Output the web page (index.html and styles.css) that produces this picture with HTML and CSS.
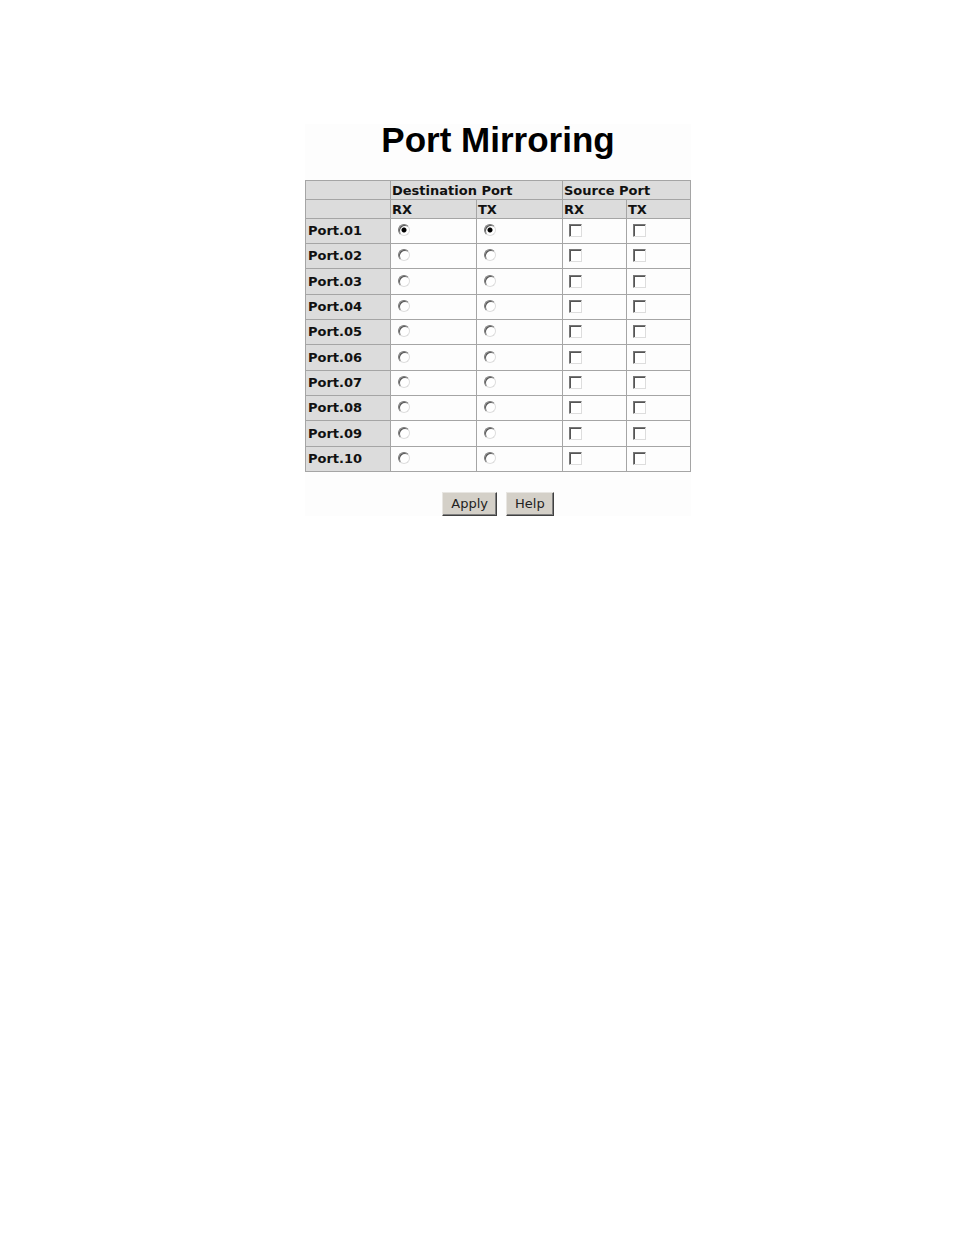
FILE: index.html
```html
<!DOCTYPE html>
<html lang="en">
<head>
    <meta charset="UTF-8">
    <meta name="viewport" content="width=device-width, initial-scale=1.0">
    <title>Port Mirroring</title>
    <link rel="stylesheet" href="styles.css">
</head>
<body>
    <form class="container">
        <h1>Port Mirroring</h1>
        <table class="ports">
            <colgroup>
                <col class="name">
                <col class="dest">
                <col class="dest">
                <col class="source">
                <col class="source">
            </colgroup>
            <thead>
                <tr>
                    <th></th>
                    <th colspan="2">Destination Port</th>
                    <th colspan="2">Source Port</th>
                </tr>
                <tr>
                    <th></th>
                    <th>RX</th>
                    <th>TX</th>
                    <th>RX</th>
                    <th>TX</th>
                </tr>
            </thead>
            <tbody>
                <tr>
                    <th>Port.01</th>
                    <td><input type="radio" name="dest_rx" aria-label="Port.01 destination RX" checked></td>
                    <td><input type="radio" name="dest_tx" aria-label="Port.01 destination TX" checked></td>
                    <td><input type="checkbox" name="src_rx" aria-label="Port.01 source RX"></td>
                    <td><input type="checkbox" name="src_tx" aria-label="Port.01 source TX"></td>
                </tr>
                <tr>
                    <th>Port.02</th>
                    <td><input type="radio" name="dest_rx" aria-label="Port.02 destination RX"></td>
                    <td><input type="radio" name="dest_tx" aria-label="Port.02 destination TX"></td>
                    <td><input type="checkbox" name="src_rx" aria-label="Port.02 source RX"></td>
                    <td><input type="checkbox" name="src_tx" aria-label="Port.02 source TX"></td>
                </tr>
                <tr>
                    <th>Port.03</th>
                    <td><input type="radio" name="dest_rx" aria-label="Port.03 destination RX"></td>
                    <td><input type="radio" name="dest_tx" aria-label="Port.03 destination TX"></td>
                    <td><input type="checkbox" name="src_rx" aria-label="Port.03 source RX"></td>
                    <td><input type="checkbox" name="src_tx" aria-label="Port.03 source TX"></td>
                </tr>
                <tr>
                    <th>Port.04</th>
                    <td><input type="radio" name="dest_rx" aria-label="Port.04 destination RX"></td>
                    <td><input type="radio" name="dest_tx" aria-label="Port.04 destination TX"></td>
                    <td><input type="checkbox" name="src_rx" aria-label="Port.04 source RX"></td>
                    <td><input type="checkbox" name="src_tx" aria-label="Port.04 source TX"></td>
                </tr>
                <tr>
                    <th>Port.05</th>
                    <td><input type="radio" name="dest_rx" aria-label="Port.05 destination RX"></td>
                    <td><input type="radio" name="dest_tx" aria-label="Port.05 destination TX"></td>
                    <td><input type="checkbox" name="src_rx" aria-label="Port.05 source RX"></td>
                    <td><input type="checkbox" name="src_tx" aria-label="Port.05 source TX"></td>
                </tr>
                <tr>
                    <th>Port.06</th>
                    <td><input type="radio" name="dest_rx" aria-label="Port.06 destination RX"></td>
                    <td><input type="radio" name="dest_tx" aria-label="Port.06 destination TX"></td>
                    <td><input type="checkbox" name="src_rx" aria-label="Port.06 source RX"></td>
                    <td><input type="checkbox" name="src_tx" aria-label="Port.06 source TX"></td>
                </tr>
                <tr>
                    <th>Port.07</th>
                    <td><input type="radio" name="dest_rx" aria-label="Port.07 destination RX"></td>
                    <td><input type="radio" name="dest_tx" aria-label="Port.07 destination TX"></td>
                    <td><input type="checkbox" name="src_rx" aria-label="Port.07 source RX"></td>
                    <td><input type="checkbox" name="src_tx" aria-label="Port.07 source TX"></td>
                </tr>
                <tr>
                    <th>Port.08</th>
                    <td><input type="radio" name="dest_rx" aria-label="Port.08 destination RX"></td>
                    <td><input type="radio" name="dest_tx" aria-label="Port.08 destination TX"></td>
                    <td><input type="checkbox" name="src_rx" aria-label="Port.08 source RX"></td>
                    <td><input type="checkbox" name="src_tx" aria-label="Port.08 source TX"></td>
                </tr>
                <tr>
                    <th>Port.09</th>
                    <td><input type="radio" name="dest_rx" aria-label="Port.09 destination RX"></td>
                    <td><input type="radio" name="dest_tx" aria-label="Port.09 destination TX"></td>
                    <td><input type="checkbox" name="src_rx" aria-label="Port.09 source RX"></td>
                    <td><input type="checkbox" name="src_tx" aria-label="Port.09 source TX"></td>
                </tr>
                <tr>
                    <th>Port.10</th>
                    <td><input type="radio" name="dest_rx" aria-label="Port.10 destination RX"></td>
                    <td><input type="radio" name="dest_tx" aria-label="Port.10 destination TX"></td>
                    <td><input type="checkbox" name="src_rx" aria-label="Port.10 source RX"></td>
                    <td><input type="checkbox" name="src_tx" aria-label="Port.10 source TX"></td>
                </tr>
            </tbody>
        </table>
        <div class="buttons">
            <button type="submit">Apply</button>
            <button type="button">Help</button>
        </div>
    </form>
</body>
</html>
```
FILE: styles.css
```css
body {
    margin: 0;
    padding: 124px 0 40px 42px;
    background-color: white;
    color: #111;
    font-family: Verdana, "DejaVu Sans", sans-serif;
    font-size: 13px;
}
.container {
    width: fit-content;
    margin: 0 auto;
    background-color: #fdfdfd;
}
h1 {
    margin: 0 0 24px;
    font-family: Arial, "Liberation Sans", sans-serif;
    font-size: 35px;
    line-height: 32px;
    text-align: center;
    color: black;
}
.ports {
    table-layout: fixed;
    width: 386px;
    border-collapse: collapse;
}
.name {
    width: 85px;
}
.dest {
    width: 86px;
}
.source {
    width: 64px;
}
th, td {
    height: 25px;
    padding: 0 2px;
    border: 1px solid #a5a5a5;
    box-sizing: border-box;
    line-height: 16px;
    text-align: left;
}
th {
    background-color: #dcdcdc;
}
thead th {
    height: 19px;
    padding: 2px 1px 0;
}
tbody tr:nth-child(3n) th {
    height: 26px;
}
td {
    padding: 0 6px;
}
input {
    appearance: none;
    display: block;
    width: 13px;
    height: 13px;
    margin: 0 0 1px;
    background-color: white;
    border: 1px solid;
    border-color: #777 #ddd #ddd #777;
    box-shadow: inset 1px 1px #555;
}
input[type="radio"] {
    width: 12px;
    height: 12px;
    margin: 0 1px 2px;
    border-radius: 50%;
}
input[type="radio"]:checked {
    background-image: radial-gradient(circle, #000 2px, transparent 3px);
}
input[type="checkbox"]:checked {
    background-image: linear-gradient(#333, #333);
    background-size: 5px 5px;
    background-position: center;
    background-repeat: no-repeat;
}
.buttons {
    display: flex;
    justify-content: center;
    gap: 9px;
    padding-top: 20px;
}
button {
    padding: 0 8px;
    background-color: #d4d0c8;
    color: #222;
    border: 1px solid;
    border-color: #e8e6e2 #404040 #404040 #e8e6e2;
    box-shadow: inset -1px -1px #808080;
    font-family: Tahoma, "DejaVu Sans", sans-serif;
    font-size: 13px;
    line-height: 22px;
}
```
